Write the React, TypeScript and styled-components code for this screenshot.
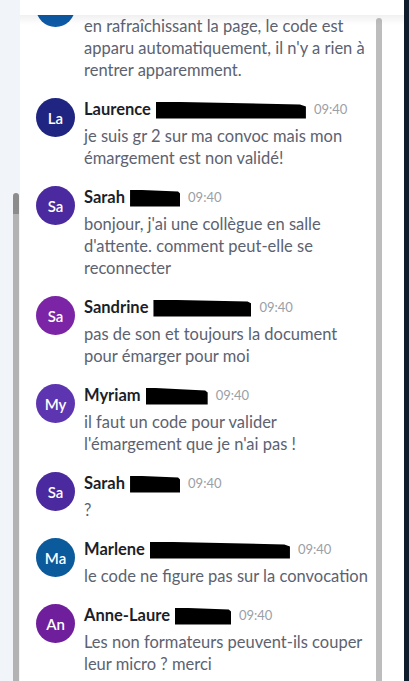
import styled, { createGlobalStyle } from 'styled-components';

type Message = {
  initials: string;
  color: string;
  name: string;
  redact: number;
  tilt: number;
  time: string;
  lines: string[];
  // the head of the first message sits above the visible part of the feed
  headHidden?: boolean;
};

const messages: Message[] = [
  {
    initials: '',
    color: '#0d5aa7',
    name: '',
    redact: 0,
    tilt: 0,
    time: '',
    headHidden: true,
    lines: [
      'en rafraîchissant la page, le code est',
      "apparu automatiquement, il n'y a rien à",
      'rentrer apparemment.',
    ],
  },
  {
    initials: 'La',
    color: '#1f2580',
    name: 'Laurence',
    redact: 150,
    tilt: 3,
    time: '09:40',
    lines: ['je suis gr 2 sur ma convoc mais mon', 'émargement est non validé!'],
  },
  {
    initials: 'Sa',
    color: '#4a2a9e',
    name: 'Sarah',
    redact: 50,
    tilt: 2,
    time: '09:40',
    lines: [
      "bonjour, j'ai une collègue en salle",
      "d'attente. comment peut-elle se",
      'reconnecter',
    ],
  },
  {
    initials: 'Sa',
    color: '#7b24a6',
    name: 'Sandrine',
    redact: 98,
    tilt: 2,
    time: '09:40',
    lines: ['pas de son et toujours la document', 'pour émarger pour moi'],
  },
  {
    initials: 'My',
    color: '#5e35b1',
    name: 'Myriam',
    redact: 62,
    tilt: 3,
    time: '09:40',
    lines: ['il faut un code pour valider', "l'émargement que je n'ai pas !"],
  },
  {
    initials: 'Sa',
    color: '#4a2a9e',
    name: 'Sarah',
    redact: 50,
    tilt: 2,
    time: '09:40',
    lines: ['?'],
  },
  {
    initials: 'Ma',
    color: '#0b5a9c',
    name: 'Marlene',
    redact: 140,
    tilt: 3,
    time: '09:40',
    lines: ['le code ne figure pas sur la convocation'],
  },
  {
    initials: 'An',
    color: '#6f1f9c',
    name: 'Anne-Laure',
    redact: 56,
    tilt: 2,
    time: '09:40',
    lines: ['Les non formateurs peuvent-ils couper', 'leur micro ? merci'],
  },
];

export default function App() {
  return (
    <>
      <GlobalStyle />
      <Page>
        <Gutter>
          <PageScrollbar />
        </Gutter>
        <Panel>
          <PanelTop />
          <ScrollArea>
            <Feed>
              <FeedInner>
                {messages.map((m, i) => (
                  <Item key={i}>
                    <Avatar $color={m.color}>{m.initials}</Avatar>
                    <Body>
                      <Meta>
                        {!m.headHidden && (
                          <>
                            <Name>{m.name}</Name>
                            <Redacted $width={m.redact} $tilt={m.tilt} />
                            <Time>{m.time}</Time>
                          </>
                        )}
                      </Meta>
                      <Text>
                        {m.lines.map((l, j) => (
                          <span key={j}>{l}</span>
                        ))}
                      </Text>
                    </Body>
                  </Item>
                ))}
              </FeedInner>
            </Feed>
            <Scrollbar />
          </ScrollArea>
        </Panel>
        <DarkEdge />
      </Page>
    </>
  );
}

const GlobalStyle = createGlobalStyle`
  html, body {
    margin: 0;
    padding: 0;
    overflow: hidden;
  }
  body {
    font-family: Lato, "Open Sans", sans-serif;
  }
`;

const Page = styled.div`
  display: flex;
  height: 681px;
  width: 409px;
  overflow: hidden;
`;

const Gutter = styled.div`
  width: 20px;
  flex-shrink: 0;
  background: #f1f4f8;
  display: flex;
  flex-direction: column;
  padding: 193px 1px 0 13px;
  box-sizing: border-box;
`;

const PageScrollbar = styled.div`
  flex: 1;
  border-radius: 3px 3px 0 0;
  background: linear-gradient(#8c8c8c 0, #8c8c8c 21px, #b3b3b3 21px);
`;

const Panel = styled.div`
  flex: 1;
  background: #fff;
  display: flex;
  flex-direction: column;
  min-width: 0;
`;

const PanelTop = styled.div`
  height: 15px;
  flex-shrink: 0;
`;

const ScrollArea = styled.div`
  flex: 1;
  display: flex;
  position: relative;
  overflow: hidden;

  &::before {
    content: '';
    position: absolute;
    left: 0;
    right: 0;
    top: 0;
    height: 10px;
    background: linear-gradient(rgba(0, 0, 0, 0.06), rgba(0, 0, 0, 0));
    pointer-events: none;
  }
`;

const Feed = styled.div`
  flex: 1;
  overflow: hidden;
  padding-left: 15px;
`;

const FeedInner = styled.div`
  margin-top: -27px;
`;

const Scrollbar = styled.div`
  width: 6px;
  flex-shrink: 0;
  margin: 3px 22px 0 0;
  background: #bdbdbd;
  border-radius: 3px 3px 0 0;
`;

const DarkEdge = styled.div`
  width: 5px;
  flex-shrink: 0;
  background: #0e1c2c;
`;

const Item = styled.div`
  display: flex;
  gap: 9px;
  margin-bottom: 17px;
`;

const Avatar = styled.div<{ $color: string }>`
  width: 39px;
  height: 39px;
  flex-shrink: 0;
  border-radius: 50%;
  background: ${(p) => p.$color};
  color: #fff;
  display: flex;
  align-items: center;
  justify-content: center;
  font-size: 15px;
  font-weight: 600;
  margin-left: 1px;
`;

const Body = styled.div`
  display: flex;
  flex-direction: column;
  min-width: 0;
`;

const Meta = styled.div`
  display: flex;
  align-items: center;
  height: 22px;
  margin-bottom: 5px;
  white-space: nowrap;
`;

const Name = styled.span`
  font-size: 16.5px;
  font-weight: 700;
  color: #1b1f2b;
`;

const Redacted = styled.span<{ $width: number; $tilt: number }>`
  display: inline-block;
  width: ${(p) => p.$width}px;
  height: 17px;
  margin: 2px 8px 0 5px;
  background: #000;
  clip-path: polygon(0 0, 96% ${(p) => p.$tilt}px, 100% ${(p) => p.$tilt + 2}px, 100% 100%, 0 100%);
`;

const Time = styled.span`
  font-size: 13px;
  color: #9aa0a6;
`;

const Text = styled.div`
  display: flex;
  flex-direction: column;
  font-size: 16.5px;
  line-height: 22px;
  color: #5c6270;
  white-space: nowrap;
`;
